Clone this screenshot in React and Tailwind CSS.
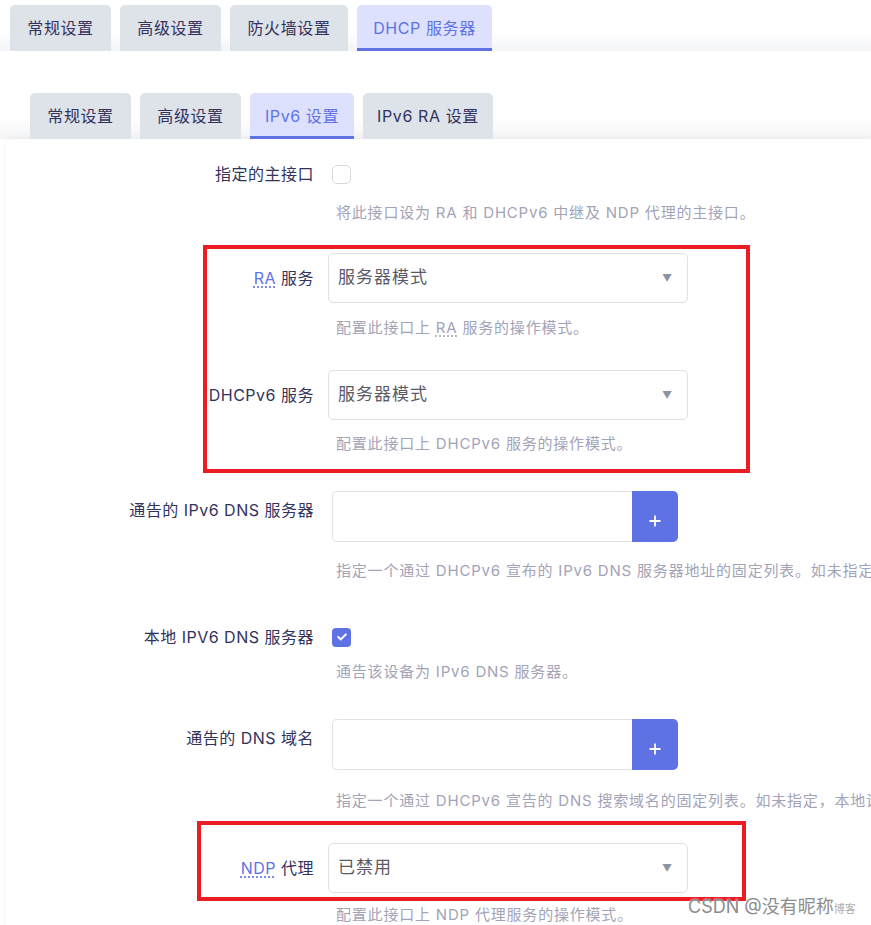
import { FaCheck } from 'react-icons/fa'

const topTabs = ['常规设置', '高级设置', '防火墙设置', 'DHCP 服务器']
const subTabs = ['常规设置', '高级设置', 'IPv6 设置', 'IPv6 RA 设置']

function Tab({ label, active, width }) {
  return (
    <div
      className={[
        'flex h-[46px] items-center justify-center rounded-t-[5px] text-[16px] tracking-[0.6px]',
        width,
        active
          ? 'border-b-[3px] border-[#5e72e4] bg-[#dde1fd] pt-[3px] text-[#5e72e4]'
          : 'bg-[#dee3ea] text-[#32325d]',
      ].join(' ')}
    >
      {label}
    </div>
  )
}

function Abbr({ children, className }) {
  return (
    <span className={`underline decoration-dotted underline-offset-[3px] ${className}`}>
      {children}
    </span>
  )
}

function Select({ value }) {
  return (
    <div className="flex h-[50px] w-[360px] items-center justify-between rounded-[5px] border border-[#dfe1e6] bg-white pl-[9px] pr-[14px] text-[17px] tracking-[1px] text-[#5a5a66]">
      <span>{value}</span>
      <span className="text-[10px] text-[#8a93a6]">▼</span>
    </div>
  )
}

function DynInput() {
  return (
    <div className="ml-1 flex h-[51px]">
      <div className="w-[300px] rounded-l-[5px] border border-r-0 border-[#dfe1e6] bg-white" />
      <div className="flex w-[46px] items-center justify-center rounded-r-[5px] bg-[#5e72e4] pt-[8px]">
        <svg width="12" height="12" viewBox="0 0 12 12" fill="none" stroke="white" strokeWidth="1.8">
          <path d="M6 0.5v11M0.5 6h11" />
        </svg>
      </div>
    </div>
  )
}

function Checkbox({ checked }) {
  return checked ? (
    <div className="ml-1 flex h-[19px] w-[19px] items-center justify-center rounded-[4px] bg-[#5e72e4] text-white">
      <FaCheck className="h-[10px] w-[10px]" />
    </div>
  ) : (
    <div className="ml-1 h-[19px] w-[19px] rounded-[5px] border border-[#d6d8de] bg-white" />
  )
}

function Row({ label, control, desc, rowClass, descClass, labelClass = 'items-center' }) {
  return (
    <div className={rowClass}>
      <div className={`flex ${labelClass}`}>
        <div className="w-[308px] text-right text-[16px] tracking-[0.5px] text-[#32325d]">{label}</div>
        <div className="ml-[14px]">{control}</div>
      </div>
      <div
        className={`pl-[330px] text-[15px] leading-[20px] tracking-[0.8px] whitespace-nowrap text-[#a3a3b8] ${descClass}`}
      >
        {desc}
      </div>
    </div>
  )
}

export default function App() {
  return (
    <div
      className="relative h-[925px] w-[871px] overflow-hidden bg-white"
      style={{ fontFamily: 'Inter, "Noto Sans CJK SC", sans-serif' }}
    >
      <div className="flex h-[51px] items-end gap-[9px] bg-[linear-gradient(to_bottom,#ffffff_64%,#f3f4f6)] pl-[10px]">
        {topTabs.map((t, i) => (
          <Tab
            key={t}
            label={t}
            active={i === 3}
            width={['w-[101px]', 'w-[101px]', 'w-[118px]', 'w-[135px]'][i]}
          />
        ))}
      </div>

      <div className="mt-[42px] flex h-[46px] items-end gap-[9px] bg-[linear-gradient(to_bottom,#ffffff_55%,#f3f4f6)] pl-[30px]">
        {subTabs.map((t, i) => (
          <Tab
            key={t}
            label={t}
            active={i === 2}
            width={['w-[101px]', 'w-[101px]', 'w-[104px]', 'w-[130px]'][i]}
          />
        ))}
      </div>

      <div className="ml-[6px] h-[800px] rounded-tl-[6px] bg-white pt-[23px] shadow-[0_0_6px_rgba(0,0,0,0.06)]">
        <Row
          label="指定的主接口"
          control={<Checkbox />}
          desc="将此接口设为 RA 和 DHCPv6 中继及 NDP 代理的主接口。"
          descClass="mt-[17px]"
        />
        <Row
          rowClass="mt-[30px]"
          label={
            <>
              <Abbr className="text-[#5e72e4]">RA</Abbr> 服务
            </>
          }
          control={<Select value="服务器模式" />}
          desc={
            <>
              配置此接口上 <Abbr>RA</Abbr> 服务的操作模式。
            </>
          }
          descClass="mt-[15px]"
        />
        <Row
          rowClass="mt-[32px]"
          label="DHCPv6 服务"
          control={<Select value="服务器模式" />}
          desc="配置此接口上 DHCPv6 服务的操作模式。"
          descClass="mt-[14px]"
        />
        <Row
          rowClass="mt-[37px]"
          labelClass="items-start"
          label={<div className="pt-[7px]">通告的 IPv6 DNS 服务器</div>}
          control={<DynInput />}
          desc="指定一个通过 DHCPv6 宣布的 IPv6 DNS 服务器地址的固定列表。如未指定，该设备将作为 IPv6 DNS 服务器。"
          descClass="mt-[19px]"
        />
        <Row
          rowClass="mt-[44px]"
          label="本地 IPV6 DNS 服务器"
          control={<Checkbox checked />}
          desc="通告该设备为 IPv6 DNS 服务器。"
          descClass="mt-[13px]"
        />
        <Row
          rowClass="mt-[37px]"
          labelClass="items-start"
          label={<div className="pt-[7px]">通告的 DNS 域名</div>}
          control={<DynInput />}
          desc="指定一个通过 DHCPv6 宣告的 DNS 搜索域名的固定列表。如未指定，本地设备 DNS 搜索域将被通告。"
          descClass="mt-[21px]"
        />
        <Row
          rowClass="mt-[32px]"
          label={
            <>
              <Abbr className="text-[#5e72e4]">NDP</Abbr> 代理
            </>
          }
          control={<Select value="已禁用" />}
          desc="配置此接口上 NDP 代理服务的操作模式。"
          descClass="mt-[12px]"
        />
      </div>

      <div className="absolute left-[203px] top-[245px] h-[228px] w-[547px] border-[4px] border-[#ec1c24]" />
      <div className="absolute left-[197px] top-[821px] h-[80px] w-[549px] border-[4px] border-[#ec1c24]" />

      <div className="absolute left-[688px] top-[893px] flex items-end whitespace-nowrap text-[18px] text-[#8c8c8c] [text-shadow:0_0_2px_#fff]">
        <span>CSDN @没有昵称</span>
        <span className="mb-[3px] text-[11px] text-[#b0b0b0]">博客</span>
      </div>
    </div>
  )
}
